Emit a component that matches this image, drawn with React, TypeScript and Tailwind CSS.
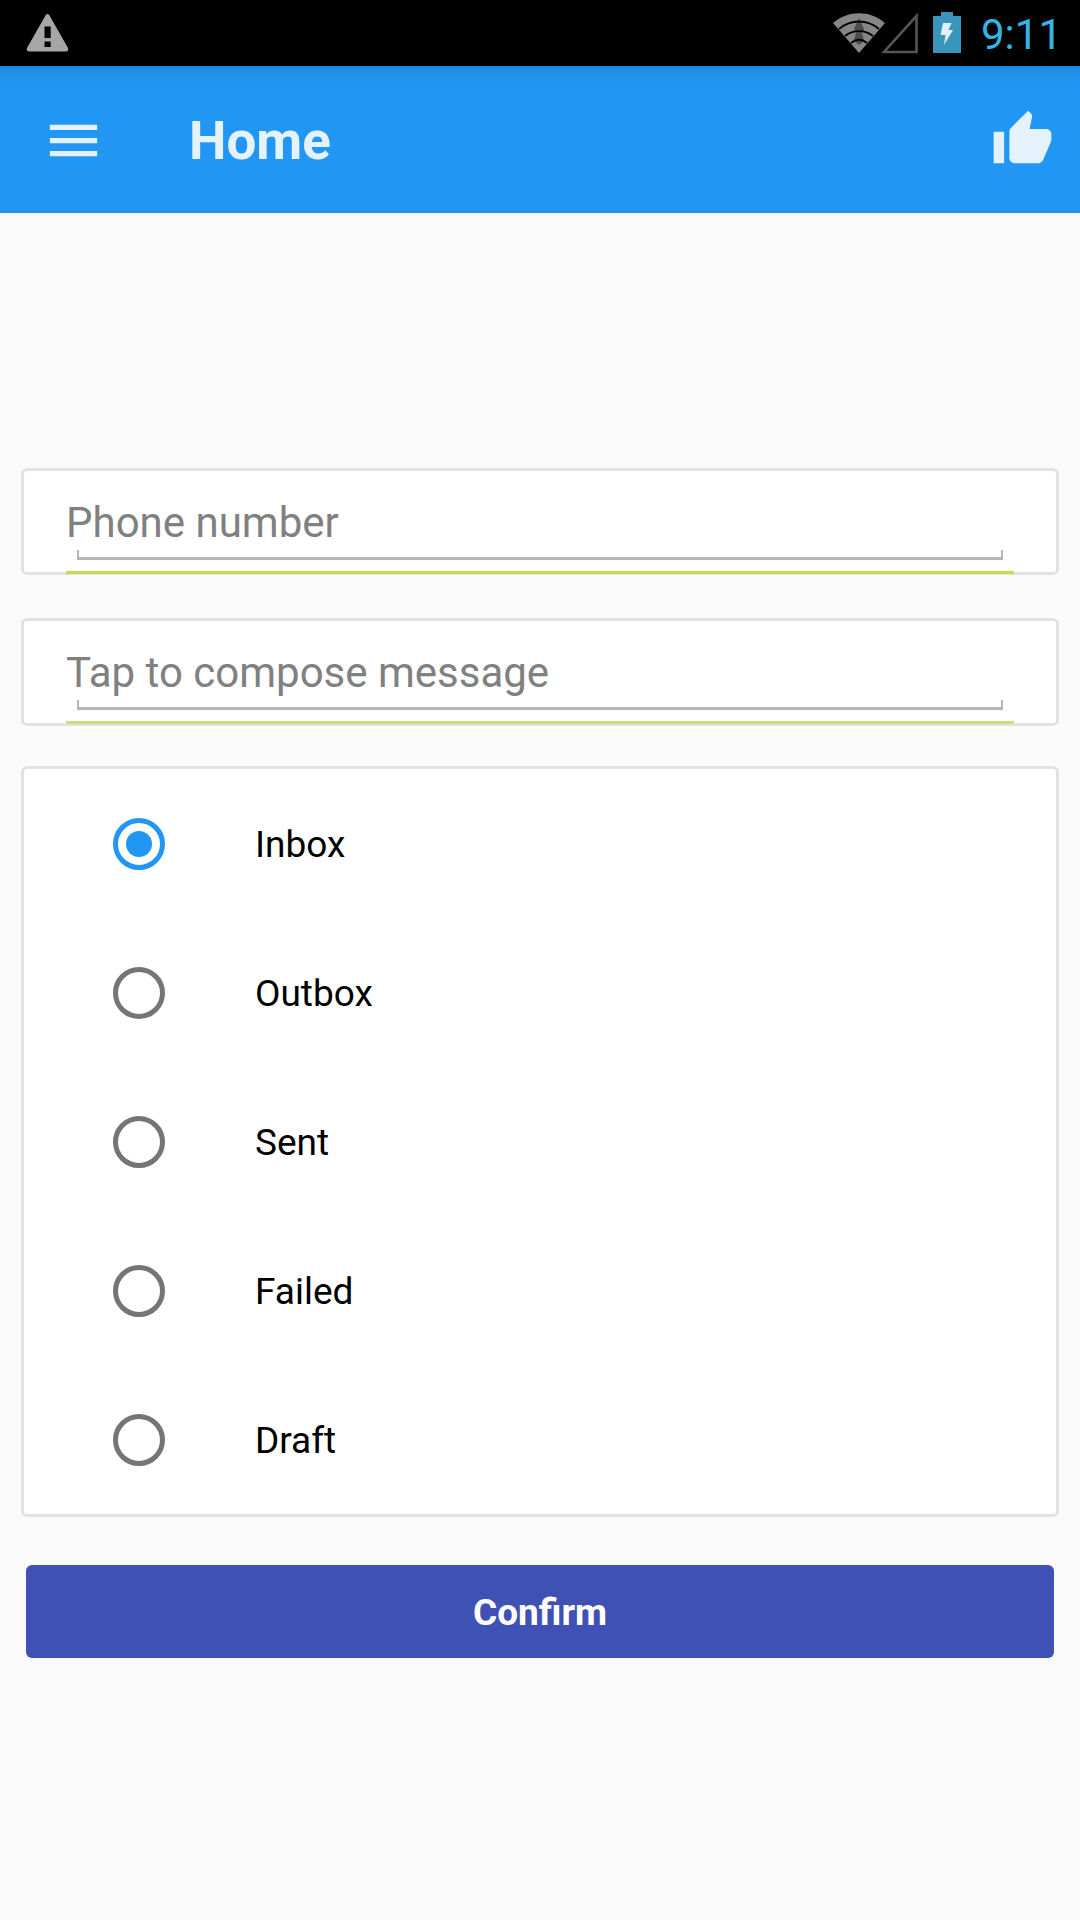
import React, { useState } from 'react';
import { MdMenu, MdThumbUp } from 'react-icons/md';

const folders = ['Inbox', 'Outbox', 'Sent', 'Failed', 'Draft'];

const StatusBar = () => (
  <div className="flex h-[66px] items-center bg-black pl-[26px] pr-[18px]">
    {/* Warning */}
    <svg width="43" height="40" viewBox="0 0 43 40" className="mr-auto">
      <path
        fill="#a6a6a6"
        fillRule="evenodd"
        d="M19.6 2.2Q21.5-.2 23.4 2.2L42 35Q43 38.5 40 38.5H3Q0 38.5 1 35ZM18.5 13.5V25H24.7V13.5ZM18.5 28.5V34H24.7V28.5Z"
      />
    </svg>

    {/* Wifi */}
    <svg width="52" height="42" viewBox="0 0 52 42">
      <path d="M0 11C15-2 37-2 52 11L26 41Z" fill="#868686" />
      <path d="M26 6L31 17L29 21L31 29L26 33L21 29L23 21L21 17Z" fill="#4c4c4c" />
      <g fill="none" stroke="#000" strokeWidth="1.8">
        <path d="M6 17C18 7 34 7 46 17" />
        <path d="M12 24C20 17.500 32 17.500 40 24" />
        <path d="M18 31C23 27 29 27 34 31" />
      </g>
    </svg>

    {/* Signal */}
    <svg width="38" height="42" viewBox="0 0 38 42" className="-ml-1">
      <path d="M3 40H35.500V4Z" fill="none" stroke="#565656" strokeWidth="2.6" />
    </svg>

    {/* Battery */}
    <svg width="28" height="42" viewBox="0 0 28 42" className="ml-[14px]">
      <path d="M8 0H20V4H28V41H0V4H8Z" fill="#3995b9" />
      <path d="M10 11H18.500L15.500 18H20L11 33L12.500 23H7.500Z" fill="#dff1f8" />
    </svg>

    <span className="ml-5 pt-1 text-[42px] leading-none text-[#33b5e5]">9:11</span>
  </div>
);

const AppBar = () => (
  <header className="flex h-[147px] items-center bg-[#2196f3] bg-linear-to-b from-black/10 via-black/4 via-[6px] to-transparent to-[24px] pl-[42px] pr-[26px] text-[#e3f2fd]">
    <button type="button" aria-label="Open menu" className="pt-0.5">
      <MdMenu size={63} />
    </button>
    <h1 className="ml-[84px] mr-auto pt-1 text-[53px] font-bold leading-none">Home</h1>
    <button type="button" aria-label="Like">
      <MdThumbUp size={63} />
    </button>
  </header>
);

type FieldProps = {
  label: string;
  type: string;
  lineClass: string;
};

const Field = ({ label, type, lineClass }: FieldProps) => (
  <div className="rounded-[6px] border-3 border-[#e2e2e2] bg-white px-[42px] pt-[23px]">
    <input
      type={type}
      aria-label={label}
      placeholder={label}
      className="block h-14 w-full bg-transparent text-[42px] leading-none outline-none placeholder:text-[#808080]"
    />
    <div className="mx-[11px] mb-[11px] h-[10px] border-x-2 border-b-3 border-[#b6b6b6]" />
    <div className={lineClass} />
  </div>
);

const App = () => {
  const [folder, setFolder] = useState('Inbox');

  return (
    <div className="min-h-screen bg-[#fafafa] font-['Roboto',sans-serif]">
      <StatusBar />
      <AppBar />

      <form className="px-[21px] pt-[255px]" onSubmit={(e) => e.preventDefault()}>
        <div className="mb-[43px]">
          <Field label="Phone number" type="tel" lineClass="-mb-[2px] h-[3px] bg-[#cad94e]" />
        </div>
        <div className="mb-10">
          <Field label="Tap to compose message" type="text" lineClass="-mb-px h-[3px] bg-[#cfd97c]" />
        </div>

        {/* Folders */}
        <div className="rounded-[6px] border-3 border-[#e2e2e2] bg-white">
          {folders.map((name) => (
            <label key={name} className="flex h-[149px] items-center pl-[89px] text-[37px] text-black">
              <input
                type="radio"
                name="folder"
                value={name}
                checked={folder === name}
                onChange={() => setFolder(name)}
                className="mr-[90px] grid size-[52px] appearance-none place-content-center rounded-full border-5 border-[#757575] checked:border-[#2196f3] checked:before:size-[26px] checked:before:rounded-full checked:before:bg-[#2196f3] checked:before:content-['']"
              />
              <span className="pt-[3px]">{name}</span>
            </label>
          ))}
        </div>

        <div className="px-[5px] pt-12">
          <button type="submit" className="h-[93px] w-full rounded-[6px] bg-[#3f51b5] pt-[3px] text-[37px] font-bold text-white">
            Confirm
          </button>
        </div>
      </form>
    </div>
  );
};

export default App;
